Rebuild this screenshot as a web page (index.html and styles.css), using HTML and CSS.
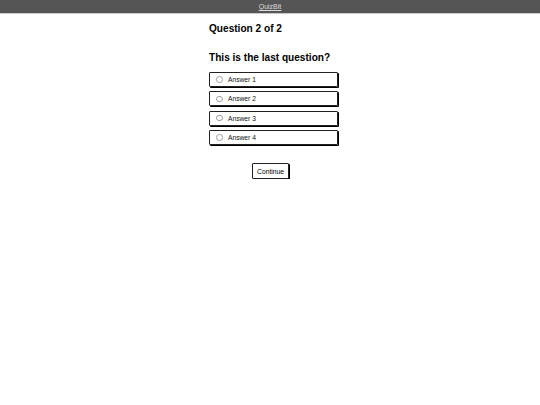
FILE: index.html
```html
<!DOCTYPE html>
<html>
<head>
<meta charset="utf-8">
<title>QuizBit</title>
<link rel="stylesheet" href="styles.css">
</head>
<body>
<header class="topbar"><a class="brand" href="#">QuizBit</a></header>
<main class="quiz">
  <h1 class="q-count">Question 2 of 2</h1>
  <h2 class="q-text">This is the last question?</h2>
  <div class="answers">
    <label class="answer"><span class="radio"></span><span class="label">Answer 1</span></label>
    <label class="answer"><span class="radio"></span><span class="label">Answer 2</span></label>
    <label class="answer"><span class="radio"></span><span class="label">Answer 3</span></label>
    <label class="answer"><span class="radio"></span><span class="label">Answer 4</span></label>
  </div>
  <div class="actions"><button class="continue">Continue</button></div>
</main>
</body>
</html>
```
FILE: styles.css
```css
html, body {
  margin: 0;
  padding: 0;
  background: #fff;
  font-family: "Liberation Sans", Arial, sans-serif;
  color: #000;
}
.topbar {
  height: 13px;
  background: #555555;
  border-bottom: 1px solid #c8c8c8;
  display: flex;
  justify-content: center;
  align-items: center;
}
.brand {
  color: #dcdcdc;
  font-size: 7px;
  text-decoration: underline;
  line-height: 13px;
}
.quiz {
  width: 122px;
  margin: 0 auto;
  padding-top: 9px;
}
.q-count, .q-text {
  font-size: 10.1px;
  font-weight: bold;
  line-height: 12px;
  margin: 0;
  white-space: nowrap;
}
.q-text {
  margin-top: 17px;
}
.answers {
  margin-top: 8px;
  width: 129px;
  display: flex;
  flex-direction: column;
  gap: 4.3px;
}
.answer {
  box-sizing: border-box;
  height: 15px;
  border: 1px solid #222;
  border-radius: 1px;
  box-shadow: 1px 1px 0 #000;
  display: flex;
  align-items: center;
  padding-left: 6px;
  font-size: 6.7px;
  color: #111;
}
.radio {
  width: 4.5px;
  height: 4.5px;
  border: 0.6px solid #a0a0a0;
  border-radius: 50%;
  margin-right: 5.5px;
}
.actions {
  margin-top: 15px;
  text-align: center;
}
.continue {
  font-family: "Liberation Sans", Arial, sans-serif;
  font-size: 6.7px;
  background: #fff;
  color: #000;
  border: 1px solid #222;
  border-radius: 1px;
  box-shadow: 1px 1px 0 #000;
  height: 16px;
  padding: 0 4px;
  margin-left: 1px;
}
```
